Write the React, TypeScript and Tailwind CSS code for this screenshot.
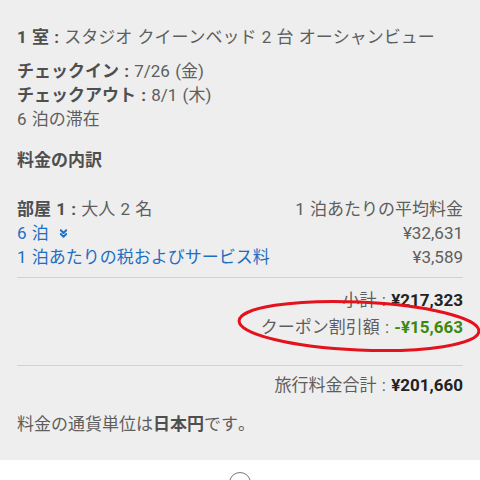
import { ChevronsDown } from "lucide-react"

const font = { fontFamily: '"Roboto", "Noto Sans CJK JP", sans-serif' }

export default function App() {
  return (
    <div
      className="w-[480px] h-[480px] overflow-hidden bg-white [font-kerning:none] [word-spacing:1px]"
      style={font}
    >
      <div className="relative bg-[#eeeeee] px-[17px] pt-[25px] pb-[24px] text-[17px] leading-[24px] text-[#5e5e5e]">
        <div>
          <span className="font-bold text-[#4f4f4f]">1 室 : </span>
          スタジオ クイーンベッド 2 台 オーシャンビュー
        </div>

        <div className="mt-[10px]">
          <div>
            <span className="font-bold text-[#4f4f4f]">チェックイン : </span>
            7/26 (金)
          </div>
          <div>
            <span className="font-bold text-[#4f4f4f]">チェックアウト : </span>
            8/1 (木)
          </div>
          <div>6 泊の滞在</div>
        </div>

        <div className="mt-[17px] font-bold text-[#4f4f4f]">料金の内訳</div>

        <div className="mt-[25px]">
          <div className="flex justify-between">
            <div>
              <span className="font-bold text-[#4f4f4f]">部屋 1 : </span>
              大人 2 名
            </div>
            <div>1 泊あたりの平均料金</div>
          </div>
          <div className="flex justify-between">
            <div className="flex items-center gap-[8px] text-[#1e6fc3]">
              <span>6 泊</span>
              <ChevronsDown size={13} strokeWidth={3.5} className="mt-[1px]" />
            </div>
            <div>¥32,631</div>
          </div>
          <div className="flex justify-between">
            <div className="text-[#1e6fc3]">1 泊あたりの税およびサービス料</div>
            <div>¥3,589</div>
          </div>
        </div>

        <div className="mt-[8px] h-px bg-[#d2d2d2]" />

        <div className="mt-[10px] text-right">
          小計 : <span className="font-bold text-[#222222]">¥217,323</span>
        </div>
        <div className="mt-[3px] text-right">
          クーポン割引額 : <span className="font-bold text-[#3b8a10]">-¥15,663</span>
        </div>

        <div className="mt-[26px] h-px bg-[#d2d2d2]" />

        <div className="mt-[7px] text-right">
          旅行料金合計 : <span className="font-bold text-[#222222]">¥201,660</span>
        </div>

        <div className="mt-[15px]">
          料金の通貨単位は<span className="font-bold text-[#4f4f4f]">日本円</span>です。
        </div>

        <svg
          className="absolute left-0 top-0 pointer-events-none"
          width="480"
          height="460"
          viewBox="0 0 480 460"
        >
          <ellipse
            cx="359"
            cy="326"
            rx="120"
            ry="24"
            transform="rotate(2.5 359 326)"
            fill="none"
            stroke="#e3121c"
            strokeWidth="3"
          />
        </svg>
      </div>
      <div className="flex justify-center pt-[12px]">
        <div className="w-[22px] h-[22px] rounded-full border-[1.5px] border-[#777777]" />
      </div>
    </div>
  )
}
